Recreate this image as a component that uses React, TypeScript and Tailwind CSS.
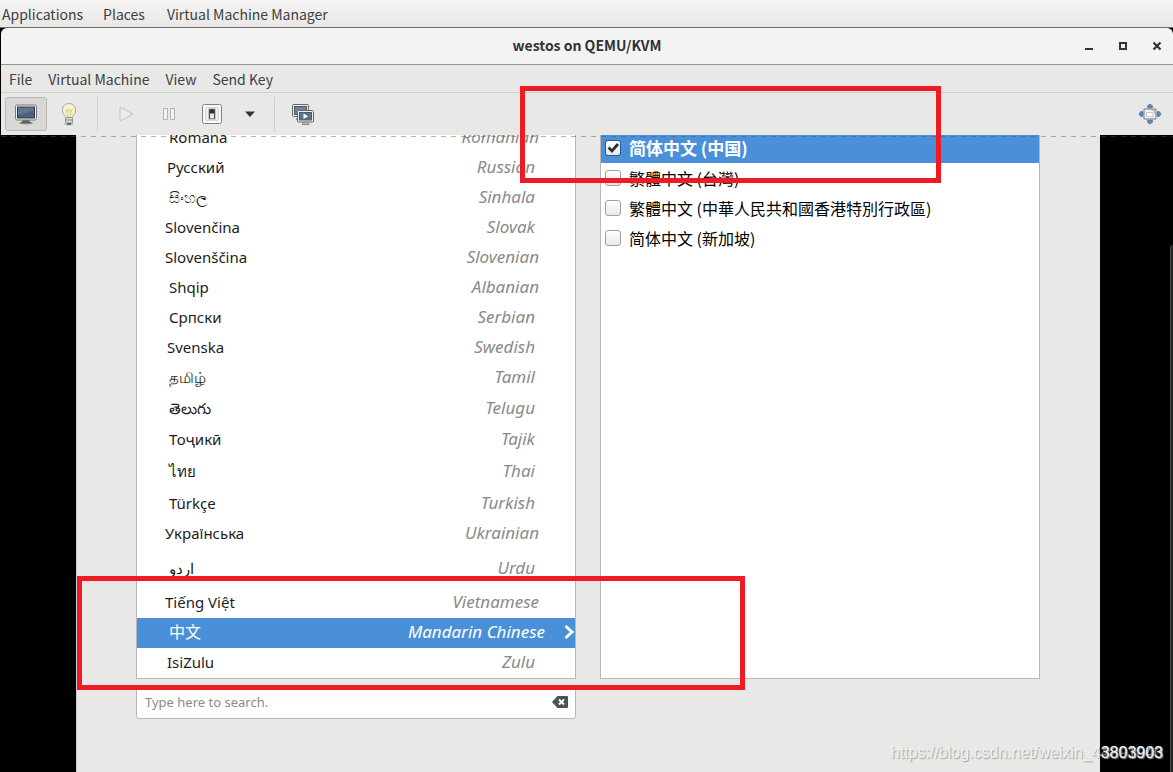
import { useState } from "react";

const languages = [
  { native: "Română", english: "Romanian", height: "h-[18px]" },
  { native: "Русский", english: "Russian", height: "h-[30px]" },
  { native: "සිංහල", english: "Sinhala", height: "h-[30px]" },
  { native: "Slovenčina", english: "Slovak", height: "h-[30px]" },
  { native: "Slovenščina", english: "Slovenian", height: "h-[30px]" },
  { native: "Shqip", english: "Albanian", height: "h-[30px]" },
  { native: "Српски", english: "Serbian", height: "h-[30px]" },
  { native: "Svenska", english: "Swedish", height: "h-[30px]" },
  { native: "தமிழ்", english: "Tamil", height: "h-[30px]" },
  { native: "తెలుగు", english: "Telugu", height: "h-[32px]" },
  { native: "Тоҷикӣ", english: "Tajik", height: "h-[30px]" },
  { native: "ไทย", english: "Thai", height: "h-[34px]" },
  { native: "Türkçe", english: "Turkish", height: "h-[30px]" },
  { native: "Українська", english: "Ukrainian", height: "h-[30px]" },
  { native: "اردو", english: "Urdu", height: "h-[39px]" },
  { native: "Tiếng Việt", english: "Vietnamese", height: "h-[30px]" },
  { native: "中文", english: "Mandarin Chinese", height: "h-[30px]" },
  { native: "IsiZulu", english: "Zulu", height: "h-[30px]" },
];

const locales = [
  "简体中文 (中国)",
  "繁體中文 (台灣)",
  "繁體中文 (中華人民共和國香港特別行政區)",
  "简体中文 (新加坡)",
];

function TopBar() {
  return (
    <nav className="flex h-7 shrink-0 items-center gap-5 border-b border-[#6e6e6c] bg-linear-to-b from-[#f6f5f4] to-[#e9e7e5] pt-px pl-[2px]">
      <button>Applications</button>
      <button>Places</button>
      <button className="ml-[2px]">Virtual Machine Manager</button>
    </nav>
  );
}

function TitleBar() {
  return (
    <header className="relative flex h-[37px] shrink-0 items-center justify-end gap-[14px] rounded-t-md border-b border-[#969894] bg-[#f3f3f3] pr-[6px] text-[#2e3436]">
      <h1 className="absolute inset-x-0 pb-[2px] text-center text-sm font-bold">westos on QEMU/KVM</h1>
      <button aria-label="Minimize" className="relative">
        <svg width="20" height="20" viewBox="0 0 20 20">
          <path d="M6 12h8v2H6z" fill="currentColor" />
        </svg>
      </button>
      <button aria-label="Maximize" className="relative">
        <svg width="20" height="20" viewBox="0 0 20 20">
          <path d="M7 7h6v6H7z" fill="none" stroke="currentColor" strokeWidth="2" />
        </svg>
      </button>
      <button aria-label="Close" className="relative">
        <svg width="20" height="20" viewBox="0 0 20 20">
          <path d="M6.5 6.5l7 7M13.5 6.5l-7 7" stroke="currentColor" strokeWidth="2.2" />
        </svg>
      </button>
    </header>
  );
}

function MenuBar() {
  return (
    <nav className="flex h-7 shrink-0 items-center gap-4 border-b border-[#d0d0ce] pt-px pl-2">
      <button>File</button>
      <button>Virtual Machine</button>
      <button>View</button>
      <button>Send Key</button>
    </nav>
  );
}

function MonitorIcon() {
  return (
    <svg width="24" height="24" viewBox="0 0 24 24">
      <ellipse cx="12" cy="21" rx="7" ry="1.5" fill="#8b8d89" />
      <path d="M9 17h6l1 3H8z" fill="#666864" />
      <rect x="1.5" y="3" width="21" height="15" rx="1.5" fill="#f2f2f0" stroke="#777975" />
      <rect x="3.5" y="5" width="17" height="11" fill="#4d607d" stroke="#2c394c" />
      <path d="M4 5.5h16v3L4 13z" fill="#71839c" opacity=".6" />
      <path d="M7 20.5h10" stroke="#555753" />
    </svg>
  );
}

function BulbIcon() {
  return (
    <svg width="24" height="24" viewBox="0 0 24 24">
      <ellipse cx="12" cy="22" rx="5" ry="1.5" fill="#c4c4c2" />
      <path d="M12 1.5a6.8 6.8 0 0 0-4.3 12c.8 1 .8 1.5.8 2.5h7c0-1 0-1.5.8-2.5A6.8 6.8 0 0 0 12 1.500z" fill="#f0efe6" stroke="#adada9" />
      <circle cx="12" cy="8" r="4" fill="#fbf4b4" opacity=".7" />
      <path d="M8.5 7.5l1.5 2 2-2 2 2 1.5-2M10 9.5l1 6M14 9.5l-1 6" fill="none" stroke="#e3d568" strokeWidth="1.2" />
      <rect x="8.5" y="15.5" width="7" height="5.5" rx="1" fill="#d7d8d5" stroke="#8f918d" />
      <path d="M9 18h6" stroke="#8f918d" />
      <path d="M10 22h4" stroke="#555753" strokeWidth="1.6" />
    </svg>
  );
}

function ConsolesIcon() {
  return (
    <svg width="24" height="24" viewBox="0 0 24 24">
      <rect x="1.5" y="2.5" width="16" height="12" rx="1" fill="#eeeeec" stroke="#666864" />
      <rect x="3.5" y="4.5" width="12" height="8" fill="#71839c" stroke="#4b5a70" />
      <path d="M5 17h5" stroke="#777975" strokeWidth="1.5" />
      <rect x="6.5" y="8.5" width="16" height="11.5" rx="1" fill="#eeeeec" stroke="#666864" />
      <rect x="8.5" y="10.5" width="12" height="7.5" fill="#5d7190" stroke="#4b5a70" />
      <path d="M12.5 11.5v5.5l4.5-2.7z" fill="#fff" />
      <path d="M12 20.5h5l1 2h-7z" fill="#babdb6" stroke="#8b8d89" />
    </svg>
  );
}

function FullscreenIcon() {
  return (
    <svg width="24" height="24" viewBox="0 0 24 24">
      <g fill="#5f87c0" stroke="#4a70a8" strokeWidth=".8">
        <path d="M12 2l2.7 2-.7 2h-4l-.7-2z" />
        <path d="M12 22l2.7-2-.7-2h-4l-.7 2z" />
        <path d="M1 12l2-2.700 2 .7v4l-2 .7z" />
        <path d="M23 12l-2-2.700-2 .7v4l2 .7z" />
      </g>
      <rect x="6" y="7" width="12" height="10" rx="1" fill="#f2f2f0" stroke="#999b96" strokeWidth="1.4" />
      <rect x="8.5" y="10.5" width="6.5" height="4" fill="#fff" stroke="#c9c9c5" />
      <path d="M13.5 8.5h3v3" fill="none" stroke="#babdb6" />
    </svg>
  );
}

function Toolbar() {
  return (
    <div role="toolbar" className="flex h-[42px] shrink-0 items-center pr-[11px] pl-[4px]">
      <button aria-label="Console" className="flex h-[34px] w-[42px] items-center justify-center rounded-[3px] border border-[#b8b8b5] bg-[#d8d8d6]">
        <MonitorIcon />
      </button>
      <button aria-label="Details" className="flex h-[34px] w-11 items-center justify-center">
        <BulbIcon />
      </button>
      <div className="ml-[6px] h-[34px] w-px bg-[#d0d0ce]" />
      <button aria-label="Run" className="ml-2 flex h-[34px] w-10 items-center justify-center">
        <svg width="20" height="20" viewBox="0 0 20 20">
          <path d="M4 3v14l13-7z" fill="#ececea" stroke="#c2c2c0" />
        </svg>
      </button>
      <button aria-label="Pause" className="ml-[3px] flex h-[34px] w-10 items-center justify-center">
        <svg width="20" height="20" viewBox="0 0 20 20">
          <path d="M4.5 4.5h4v11h-4zM11.5 4.5h4v11h-4z" fill="#f2f2f0" stroke="#b2b2b0" />
        </svg>
      </button>
      <button aria-label="Shut down" className="ml-[3px] flex h-[34px] w-10 items-center justify-center">
        <svg width="22" height="22" viewBox="0 0 22 22">
          <rect x="1.5" y="1.5" width="19" height="19" rx="2" fill="#fafafa" stroke="#80827e" />
          <rect x="4.5" y="4.5" width="13" height="13" rx="1" fill="#f0f0ee" stroke="#d4d4d2" />
          <rect x="8" y="6" width="6" height="10" fill="#2e2e2e" stroke="#888a85" strokeWidth=".8" />
          <rect x="9" y="10.5" width="4" height="5" fill="#e6e6e4" />
        </svg>
      </button>
      <button aria-label="Shut down options" className="flex h-[34px] w-9 items-center justify-center">
        <svg width="10" height="6" viewBox="0 0 10 6">
          <path d="M0 .5h10L5 6z" fill="#2e3436" />
        </svg>
      </button>
      <div className="ml-[6px] h-[34px] w-px bg-[#d0d0ce]" />
      <button aria-label="Snapshots" className="ml-2 flex h-[34px] w-10 items-center justify-center">
        <ConsolesIcon />
      </button>
      <button aria-label="Fullscreen" className="ml-auto">
        <FullscreenIcon />
      </button>
    </div>
  );
}

function LanguageList({ selected, onSelect }: { selected: string; onSelect: (name: string) => void }) {
  return (
    <ul className="border-x border-b border-[#b8b8b6] bg-white">
      {languages.map(({ native, english, height }, i) => {
        const active = english === selected;
        return (
          <li key={english}>
            <button
              onClick={() => onSelect(english)}
              className={`flex w-full justify-between overflow-hidden ${height} ${
                i === 0 ? "items-end pb-px" : "items-center pb-[2px]"
              } ${active ? "bg-[#4a90d9] text-white" : "text-[#1c1c1c]"}`}
            >
              <span
                className={`leading-[30px] ${native.length > 7 ? "pl-7" : native.length > 6 ? "pl-[30px]" : "pl-8"} ${
                  active ? "text-base" : "text-[15px]"
                }`}
              >
                {native}
              </span>
              <span className={`flex items-center text-[17px] leading-[30px] italic ${active ? "" : "text-[#8a8a8a]"}`}>
                {english}
                {active ? (
                  <svg className="ml-[18px]" width="12" height="16" viewBox="0 0 12 16">
                    <path d="M2.5 2l6.5 6-6.5 6" fill="none" stroke="#fff" strokeWidth="3" />
                  </svg>
                ) : (
                  <span className={english.length > 7 ? "w-9" : "w-10"} />
                )}
              </span>
            </button>
          </li>
        );
      })}
    </ul>
  );
}

function LocaleList() {
  const [checked, setChecked] = useState([locales[0]]);

  const toggle = (name: string) =>
    setChecked(checked.includes(name) ? checked.filter((n) => n !== name) : [...checked, name]);

  return (
    <div className="border-x border-b border-[#b8b8b6] bg-white font-['Noto_Sans_CJK_SC',sans-serif] text-base text-black">
      {locales.map((name, i) => (
        <label
          key={name}
          className={`flex items-center gap-2 pl-1 ${i === 0 ? "h-7 bg-[#4a90d9] pb-[2px] text-[17px] font-bold text-white" : "h-[30px]"}`}
        >
          <span className="grid">
            <input
              type="checkbox"
              checked={checked.includes(name)}
              onChange={() => toggle(name)}
              className="col-start-1 row-start-1 size-4 appearance-none rounded-[3px] border border-[#a0a09c] bg-linear-to-b from-white to-[#e8e8e6] checked:border-[#2c5a8c]"
            />
            {checked.includes(name) && (
              <svg className="pointer-events-none relative col-start-1 row-start-1" width="16" height="16" viewBox="0 0 16 16">
                <path d="M3.5 7.5l3.5 3.5 6-7" fill="none" stroke="#2e3436" strokeWidth="2.8" />
              </svg>
            )}
          </span>
          {name}
        </label>
      ))}
    </div>
  );
}

function Installer() {
  const [selected, setSelected] = useState("Mandarin Chinese");
  const [query, setQuery] = useState("");

  return (
    <main className="w-full max-w-[1024px] border-l border-[#cfcfcd] bg-[#e8e8e6] pr-[60px] pl-[59px]">
      <div className="grid grid-cols-2 gap-x-6">
        <LanguageList selected={selected} onSelect={setSelected} />
        <LocaleList />
        <div className="mt-[6px] flex h-[34px] items-center rounded-[3px] border border-[#b8b8b6] bg-white pr-[7px] pl-2">
          <input
            aria-label="Search languages"
            placeholder="Type here to search."
            value={query}
            onChange={(e) => setQuery(e.target.value)}
            className="min-w-0 flex-1 text-[13px] outline-none placeholder:text-[#8b8b8b]"
          />
          <button aria-label="Clear" onClick={() => setQuery("")}>
            <svg width="16" height="12" viewBox="0 0 16 12">
              <path d="M5.5 0H15a1 1 0 0 1 1 1v10a1 1 0 0 1-1 1H5.5L0 6z" fill="#4b5356" />
              <path d="M7 3.5l5 5M12 3.5l-5 5" stroke="#fff" strokeWidth="2" />
            </svg>
          </button>
        </div>
      </div>
    </main>
  );
}

export default function App() {
  return (
    <div className="relative flex min-h-screen flex-col bg-black font-['Noto_Sans_CJK_SC',sans-serif] text-sm text-[#3c4143]">
      <TopBar />
      <div className="flex flex-1 flex-col pl-px">
        <TitleBar />
        <div className="bg-[#e8e8e6]">
          <MenuBar />
          <Toolbar />
        </div>
        <div className="relative flex flex-1 justify-center pr-px pl-[3px] font-['Noto_Sans','Noto_Sans_CJK_SC',sans-serif]">
          <Installer />
          <div className="absolute inset-x-0 top-px h-px bg-[repeating-linear-gradient(90deg,#50505070_0_5px,transparent_5px_10px)]" />
          <div className="absolute top-[110px] right-0 bottom-0 w-[3px] rounded-tl border-l border-[#4a4a4a] bg-[#222]" />
        </div>
      </div>

      <div className="absolute top-[86px] left-[520px] h-[97px] w-[421px] border-5 border-[#ee1b24]" />
      <div className="absolute top-[576px] left-[77px] h-[114px] w-[668px] border-5 border-[#ee1b24]" />

      <div className="absolute right-[10px] bottom-[7px] font-['Liberation_Sans',sans-serif] text-base text-[#f0f0f0] [text-shadow:1px_1px_1px_#a0a0a0]">
        https://blog.csdn.net/weixin_43803903
        <span className="absolute right-0 text-[#f0f0f0]/50 [text-shadow:none]">4891040</span>
      </div>
    </div>
  );
}
